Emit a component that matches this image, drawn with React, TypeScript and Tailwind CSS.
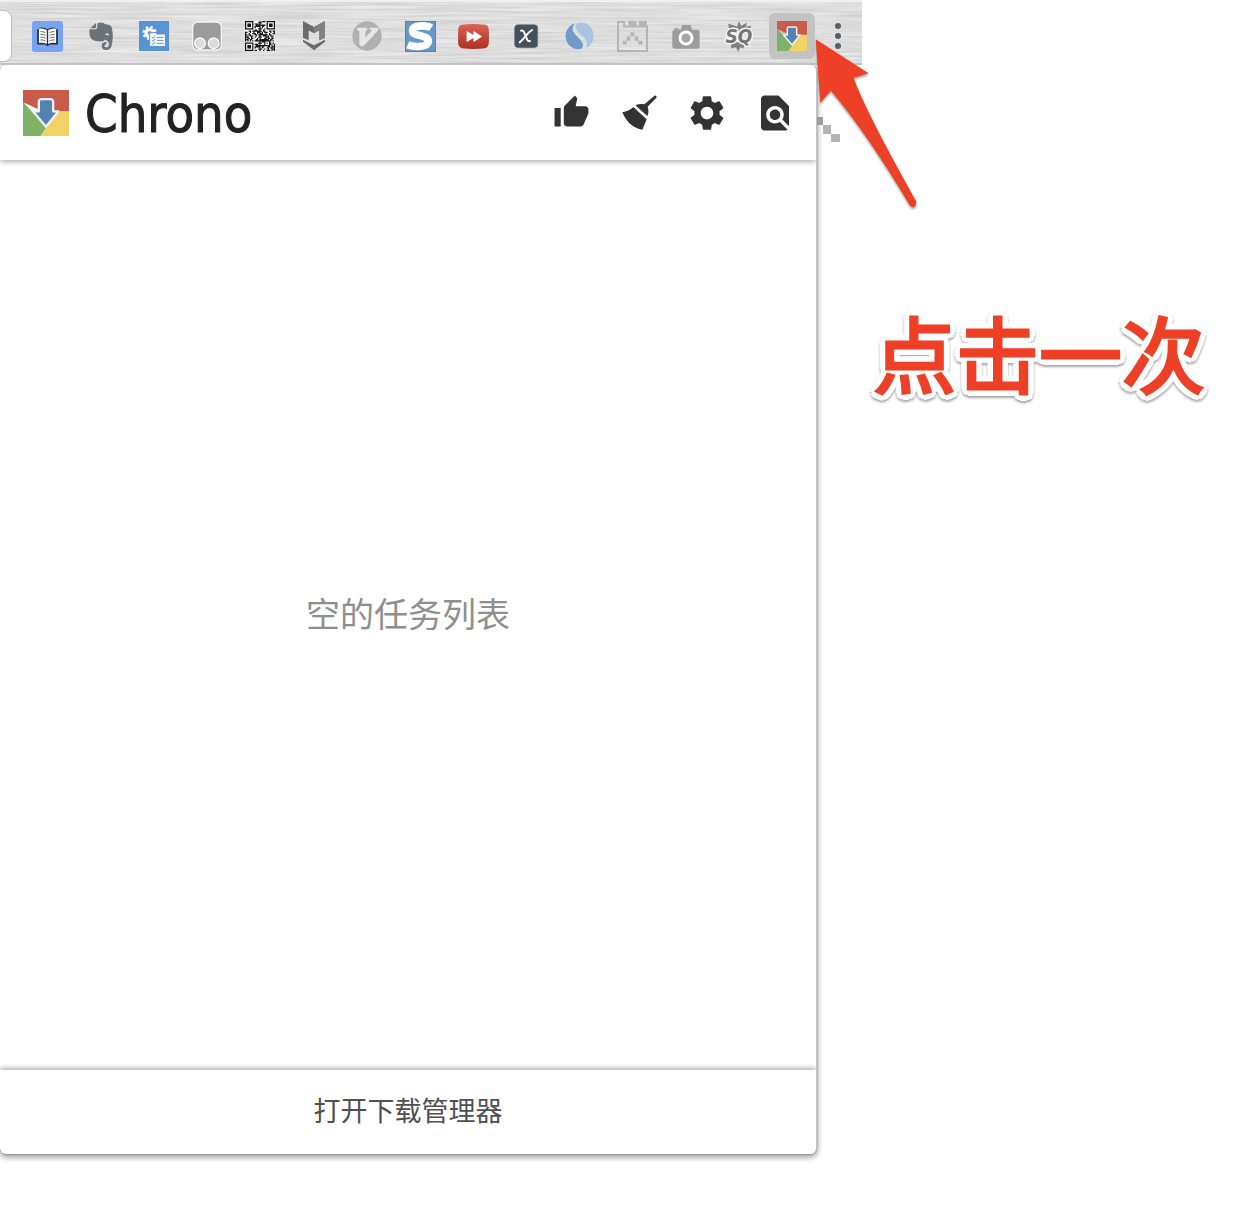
import React from "react";
import { MdThumbUp, MdSettings, MdFindInPage } from "react-icons/md";

function ChronoLogo({ className }: { className: string }) {
  return (
    <svg viewBox="0 0 90 90" className={className} aria-hidden="true">
      <path d="M0 0H90V42H40L0 24Z" fill="#c95a4c" />
      <path d="M0 23L46 74L35 90H0Z" fill="#7fb268" />
      <path d="M90 41V90H34L46 74L62 41Z" fill="#f2d264" />
      <path
        d="M31 21L34 18H56L59 21V42H69L45 72L20 42H31Z"
        fill="#5482b3"
        stroke="#f1f1f3"
        strokeWidth="4.5"
        strokeLinejoin="round"
      />
    </svg>
  );
}

function BookIcon() {
  return (
    <svg viewBox="0 0 90 90" className="size-[31px]">
      <rect width="90" height="90" rx="8" fill="#77a3f5" />
      <path d="M15 24H20V20Q34 17 45 24Q56 17 70 20V24H75V68H52L45 73L38 68H15Z" fill="#2c2c2c" />
      <path d="M20 22Q34 20 43 26V67Q33 61 20 64Z" fill="#fff" />
      <path d="M70 22Q56 20 47 26V67Q57 61 70 64Z" fill="#fff" />
      <path
        d="M24 31Q33 30 39 34M24 39Q33 38 39 42M24 47Q33 46 39 50M24 55Q33 54 39 58M66 31Q57 30 51 34M66 39Q57 38 51 42M66 47Q57 46 51 50M66 55Q57 54 51 58"
        fill="none"
        stroke="#555"
        strokeWidth="2.5"
      />
    </svg>
  );
}

function ElephantIcon() {
  return (
    <svg viewBox="0 0 72 84" className="h-[28px] w-[24px]">
      <path d="M21 3V15Q21 19 17 19H4Z" fill="#6b7478" />
      <path
        d="M19 22Q25 22 25 16V4Q30 0 42 2Q46 6 58 8Q68 10 69 20Q74 45 68 70Q66 84 52 84Q38 84 38 72Q38 60 52 60V66Q46 68 46 73Q48 77 55 76Q60 74 60 64Q56 54 48 53Q44 60 30 58Q10 58 4 46Q0 34 2 22Z"
        fill="#6b7478"
      />
      <path d="M49 40Q49 33 55 34Q61 35 60 41Q54 38 49 40Z" fill="#dedede" />
    </svg>
  );
}

function TasksIcon() {
  return (
    <svg viewBox="0 0 90 90" className="size-[30px]">
      <rect width="90" height="90" fill="#5894d4" />
      <circle cx="32" cy="36" r="18" fill="none" stroke="#fff" strokeWidth="7" strokeDasharray="7 7.14" />
      <circle cx="32" cy="36" r="11" fill="none" stroke="#fff" strokeWidth="10" />
      <path d="M32 35H50L53 39H79V76H32Z" fill="#fff" stroke="#5894d4" strokeWidth="3" />
      <path d="M53 49H74M53 58H74M53 67H74" stroke="#5894d4" strokeWidth="3" />
      <path d="M38 48L42 52L48 45M38 57L42 61L48 54M38 66L42 70L48 63" fill="none" stroke="#5894d4" strokeWidth="3" />
    </svg>
  );
}

function TamperIcon() {
  return (
    <svg viewBox="0 0 90 90" className="size-[30px]">
      <rect x="2" y="3" width="86" height="84" rx="15" fill="#9b9b9b" stroke="#f5f5f5" strokeWidth="4" />
      <circle cx="24" cy="67" r="16" fill="#dcdcdc" stroke="#fafafa" strokeWidth="4" />
      <circle cx="65" cy="67" r="16" fill="#dcdcdc" stroke="#fafafa" strokeWidth="4" />
    </svg>
  );
}

const QR_SIZE = 25;

function isDark(x: number, y: number) {
  const corners = [
    [0, 0],
    [QR_SIZE - 7, 0],
    [0, QR_SIZE - 7],
  ];
  for (const [cx, cy] of corners) {
    const dx = x - cx;
    const dy = y - cy;
    if (dx >= -1 && dx <= 7 && dy >= -1 && dy <= 7) {
      const ring = Math.max(Math.abs(dx - 3), Math.abs(dy - 3));
      return ring === 3 || ring <= 1;
    }
  }
  const alignment = Math.max(Math.abs(x - 18), Math.abs(y - 18));
  if (alignment <= 2) return alignment !== 1;
  return ((x * 73 + y * 151 + x * y * 37 + x * x * 11) % 17) % 2 === 0;
}

function QrIcon() {
  let d = "";
  for (let y = 0; y < QR_SIZE; y++) {
    for (let x = 0; x < QR_SIZE; x++) {
      if (isDark(x, y)) d += `M${x} ${y}h1v1h-1z`;
    }
  }
  return (
    <svg viewBox="0 0 25 25" className="size-[30px]">
      <rect width="25" height="25" fill="#f4f4f4" />
      <path d={d} fill="#161616" />
    </svg>
  );
}

function ShieldIcon() {
  return (
    <svg viewBox="0 0 90 90" className="size-[30px]">
      <path d="M12 0L45 18L78 0V50L61 58V28L45 37L29 28V58L12 50Z" fill="#6b6b6b" />
      <path d="M12 56L45 73L78 56V62L45 88L12 62Z" fill="#6b6b6b" />
      <path d="M78 0V50L61 58V28L45 37V18Z" fill="#828282" />
    </svg>
  );
}

function VIcon() {
  return (
    <svg viewBox="0 0 90 90" className="size-[30px]">
      <circle cx="45" cy="45" r="44" fill="#b0b0b0" />
      <path d="M15 20H42L47 25L40 32V50L60 28L53 25V20H79V28L34 76H27L22 71V31L15 27Z" fill="#e6e6e6" />
    </svg>
  );
}

function BlueSIcon() {
  return (
    <svg viewBox="0 0 90 90" className="size-[31px]">
      <rect x="1" y="1" width="88" height="88" fill="#6798c7" stroke="#4c80b2" strokeWidth="3" />
      <path
        d="M76 20C65 13 24 9 22 28C20 46 70 39 68 59C66 78 23 76 8 69"
        fill="none"
        stroke="#fff"
        strokeWidth="22"
      />
    </svg>
  );
}

function ForwardIcon() {
  return (
    <svg viewBox="0 0 90 90" className="size-[31px]">
      <defs>
        <linearGradient id="forward-red" x1="0" y1="0" x2="0" y2="1">
          <stop offset="0" stopColor="#db6254" />
          <stop offset="1" stopColor="#b13024" />
        </linearGradient>
      </defs>
      <path d="M12 11Q45 7 78 11Q87 12 89 22Q91 45 89 68Q87 77 78 79Q45 83 12 79Q3 77 1 68Q-1 45 1 22Q3 12 12 11Z" fill="url(#forward-red)" />
      <path d="M25 29L45 41V29L70 45L45 61V49L25 61Z" fill="#fff" />
    </svg>
  );
}

function XIcon() {
  return (
    <svg viewBox="0 0 90 90" className="size-[30px]">
      <rect x="11" y="11" width="69" height="69" rx="10" fill="#44515b" stroke="#66737c" strokeWidth="2" />
      <path d="M30 29Q37 26 41 38L48 55Q51 62 57 60M63 27Q55 32 44 45Q34 58 26 64" fill="none" stroke="#fff" strokeWidth="6" strokeLinecap="round" />
    </svg>
  );
}

function SwirlIcon() {
  return (
    <svg viewBox="0 0 90 90" className="size-[30px]">
      <path d="M25 8C-4 24-6 61 20 79C35 88 53 86 54 74C56 58 23 42 23 24Q23 14 29 7Z" fill="#6f9bcb" />
      <path d="M36 7C58-1 85 14 86 44Q86 69 64 81C71 56 56 49 44 39C31 27 29 13 36 7Z" fill="#a9c5e3" />
    </svg>
  );
}

function PixelBoxIcon() {
  return (
    <svg viewBox="0 0 90 90" className="size-[31px]" fill="#b5b5b5">
      <path d="M0 0H24V13H33V0H57V13H63V0H87V13H90V90H0ZM6 6V84H84V19H18V6Z" fillRule="evenodd" />
      <path d="M39 33h12v12h-12zM28 45h11v12h-11zM51 45h11v12h-11zM17 57h11v11h-11zM62 57h12v11h-12z" />
    </svg>
  );
}

function CameraIcon() {
  return (
    <svg viewBox="0 0 90 90" className="size-[30px]">
      <path d="M10 22H22V26H29L34 12H59L63 26H80Q86 26 86 32V77Q86 83 80 83H10Q4 83 4 77V32Q4 27 10 26Z" fill="#9c9c9c" />
      <circle cx="45" cy="51" r="18" fill="#a5a5a5" stroke="#fff" strokeWidth="9" />
    </svg>
  );
}

function SqIcon() {
  return (
    <svg viewBox="0 0 90 90" className="size-[31px] overflow-visible">
      <path d="M12 8L28 12L38 17L43 1L50 14L66 5L64 17L80 14L70 30H16ZM20 62H70L74 74L60 70L56 80L47 76L41 90L35 76L21 80Z" fill="#808080" />
      <text
        x="43"
        y="64"
        textAnchor="middle"
        fontFamily="DejaVu Sans Condensed, DejaVu Sans, sans-serif"
        fontSize="55"
        fontWeight="700"
        fontStyle="italic"
        fill="#757575"
        stroke="#f3f3f3"
        strokeWidth="9"
        paintOrder="stroke"
      >
        SQ
      </text>
    </svg>
  );
}

function BroomIcon() {
  return (
    <svg viewBox="0 0 105 105" className="size-[35px]" fill="#333">
      <path d="M97 2Q103 0 104 6Q104 9 100 11L77 35Q82 50 76 63L40 31Q53 25 67 28L92 7Z" />
      <path d="M34 36L74 73Q68 89 61 104Q21 99 1 52Q20 49 34 36Z" />
    </svg>
  );
}

const extensions: { name: string; icon: React.ReactNode }[] = [
  { name: "阅读", icon: <BookIcon /> },
  { name: "笔记", icon: <ElephantIcon /> },
  { name: "任务设置", icon: <TasksIcon /> },
  { name: "脚本", icon: <TamperIcon /> },
  { name: "二维码", icon: <QrIcon /> },
  { name: "安全", icon: <ShieldIcon /> },
  { name: "键盘", icon: <VIcon /> },
  { name: "搜索", icon: <BlueSIcon /> },
  { name: "视频", icon: <ForwardIcon /> },
  { name: "XPath", icon: <XIcon /> },
  { name: "统计", icon: <SwirlIcon /> },
  { name: "像素", icon: <PixelBoxIcon /> },
  { name: "截图", icon: <CameraIcon /> },
  { name: "SQ", icon: <SqIcon /> },
];

const actions: { name: string; icon: React.ReactNode }[] = [
  { name: "点赞", icon: <MdThumbUp className="size-[37px]" /> },
  { name: "清理", icon: <BroomIcon /> },
  { name: "设置", icon: <MdSettings className="size-[42px]" /> },
  { name: "查找", icon: <MdFindInPage className="size-[42px]" /> },
];

function Toolbar() {
  return (
    <header className="relative flex h-[65px] w-full max-w-[862px] shrink-0 items-center bg-[#dedede] pt-[7px]">
      <svg className="absolute inset-0 size-full" aria-hidden="true">
        <filter id="brushed" x="0" y="0" width="100%" height="100%" colorInterpolationFilters="sRGB">
          <feTurbulence type="fractalNoise" baseFrequency="0.012 0.45" numOctaves="3" seed="4" />
          <feColorMatrix values="0.16 0 0 0 0.79  0.16 0 0 0 0.79  0.16 0 0 0 0.79  0 0 0 0 1" />
        </filter>
        <rect width="100%" height="100%" filter="url(#brushed)" />
        <rect width="100%" height="2" fill="#f0f0f0" />
        <rect y="63" width="100%" height="2" fill="#c2c2c2" />
      </svg>
      <div className="relative mr-[9px] h-[52px] w-3 rounded-r-lg border-y border-r border-[#bdbdbd] bg-white" />
      <nav className="relative flex flex-1 items-center">
        {extensions.map((item) => (
          <button key={item.name} type="button" aria-label={item.name} className="flex flex-1 justify-center">
            {item.icon}
          </button>
        ))}
        <div className="flex flex-1 justify-center">
          <button
            type="button"
            aria-label="Chrono"
            className="flex size-[46px] items-center justify-center rounded-md bg-[#c3c3c3]"
          >
            <ChronoLogo className="size-[30px]" />
          </button>
        </div>
      </nav>
      <button
        type="button"
        aria-label="菜单"
        className="relative mr-[5px] flex w-[38px] flex-col items-center gap-1"
      >
        <span className="size-[6px] rounded-full bg-[#5b5f62]" />
        <span className="size-[6px] rounded-full bg-[#5b5f62]" />
        <span className="size-[6px] rounded-full bg-[#5b5f62]" />
      </button>
    </header>
  );
}

function Popup() {
  return (
    <main className="flex w-full max-w-[817px] flex-col overflow-hidden rounded-md border-r border-[#c4c4c4] bg-white shadow-[0_3px_6px_rgba(0,0,0,0.42),0_0_2px_rgba(0,0,0,0.4)]">
      <div className="flex h-[95px] items-center pr-[7px] pl-[23px] shadow-[0_1px_6px_rgba(0,0,0,0.4)]">
        <ChronoLogo className="size-[46px]" />
        <h1 className="ml-4 flex-1 pt-[2px] font-['DejaVu_Sans_Condensed','DejaVu_Sans',sans-serif] text-[52px] leading-[60px] text-[#222] [-webkit-text-stroke:1px_#222]">
          Chrono
        </h1>
        <div className="flex text-[#333]">
          {actions.map((item) => (
            <button key={item.name} type="button" aria-label={item.name} className="flex h-[48px] w-[68px] items-center justify-center">
              {item.icon}
            </button>
          ))}
        </div>
      </div>
      <p className="flex flex-1 items-center justify-center pb-1 text-[34px] leading-[48px] text-[#8f8f8f]">空的任务列表</p>
      <button
        type="button"
        className="h-[84px] pb-[5px] text-[27px] leading-[36px] text-[#505050] shadow-[0_-1px_6px_rgba(0,0,0,0.4)]"
      >
        打开下载管理器
      </button>
    </main>
  );
}

function Pointer() {
  return (
    <svg
      viewBox="0 0 120 190"
      className="pointer-events-none absolute top-[30px] left-[810px] h-[190px] w-[120px] overflow-visible"
      aria-hidden="true"
    >
      <path d="M7 87h6v8h-6z" fill="#9f9f9f" />
      <path d="M13 95h8v9h-8zM21 104h9v8h-9z" fill="#b3b3b3" />
      <path
        d="M5.7 9.3L58.7 43.3L43.7 47.7Q54 78 106 171Q107 175 104 177Q101 178 99 174Q58 105 21 60.7L10.3 72.7Z"
        fill="#ed4026"
        className="drop-shadow-[0_2px_1px_rgba(0,0,0,0.35)]"
      />
    </svg>
  );
}

export default function App() {
  return (
    <div className="relative flex h-screen flex-col overflow-hidden bg-white pb-[78px] font-['Noto_Sans_CJK_SC',sans-serif]">
      <Toolbar />
      <div className="flex flex-1">
        <Popup />
        <aside className="flex-1 pt-[226px] pl-[56px]">
          <p className="text-[83px] leading-[120px] font-normal whitespace-nowrap text-[#ed4026] drop-shadow-[0_2px_1px_rgba(0,0,0,0.35)] [-webkit-text-stroke:3px_#ed4026] [text-shadow:7px_0_#fff,6px_3px_#fff,5px_5px_#fff,3px_6px_#fff,0_7px_#fff,-3px_6px_#fff,-5px_5px_#fff,-6px_3px_#fff,-7px_0_#fff,-6px_-3px_#fff,-5px_-5px_#fff,-3px_-6px_#fff,0_-7px_#fff,3px_-6px_#fff,5px_-5px_#fff,6px_-3px_#fff]">
            点击一次
          </p>
        </aside>
      </div>
      <Pointer />
    </div>
  );
}
